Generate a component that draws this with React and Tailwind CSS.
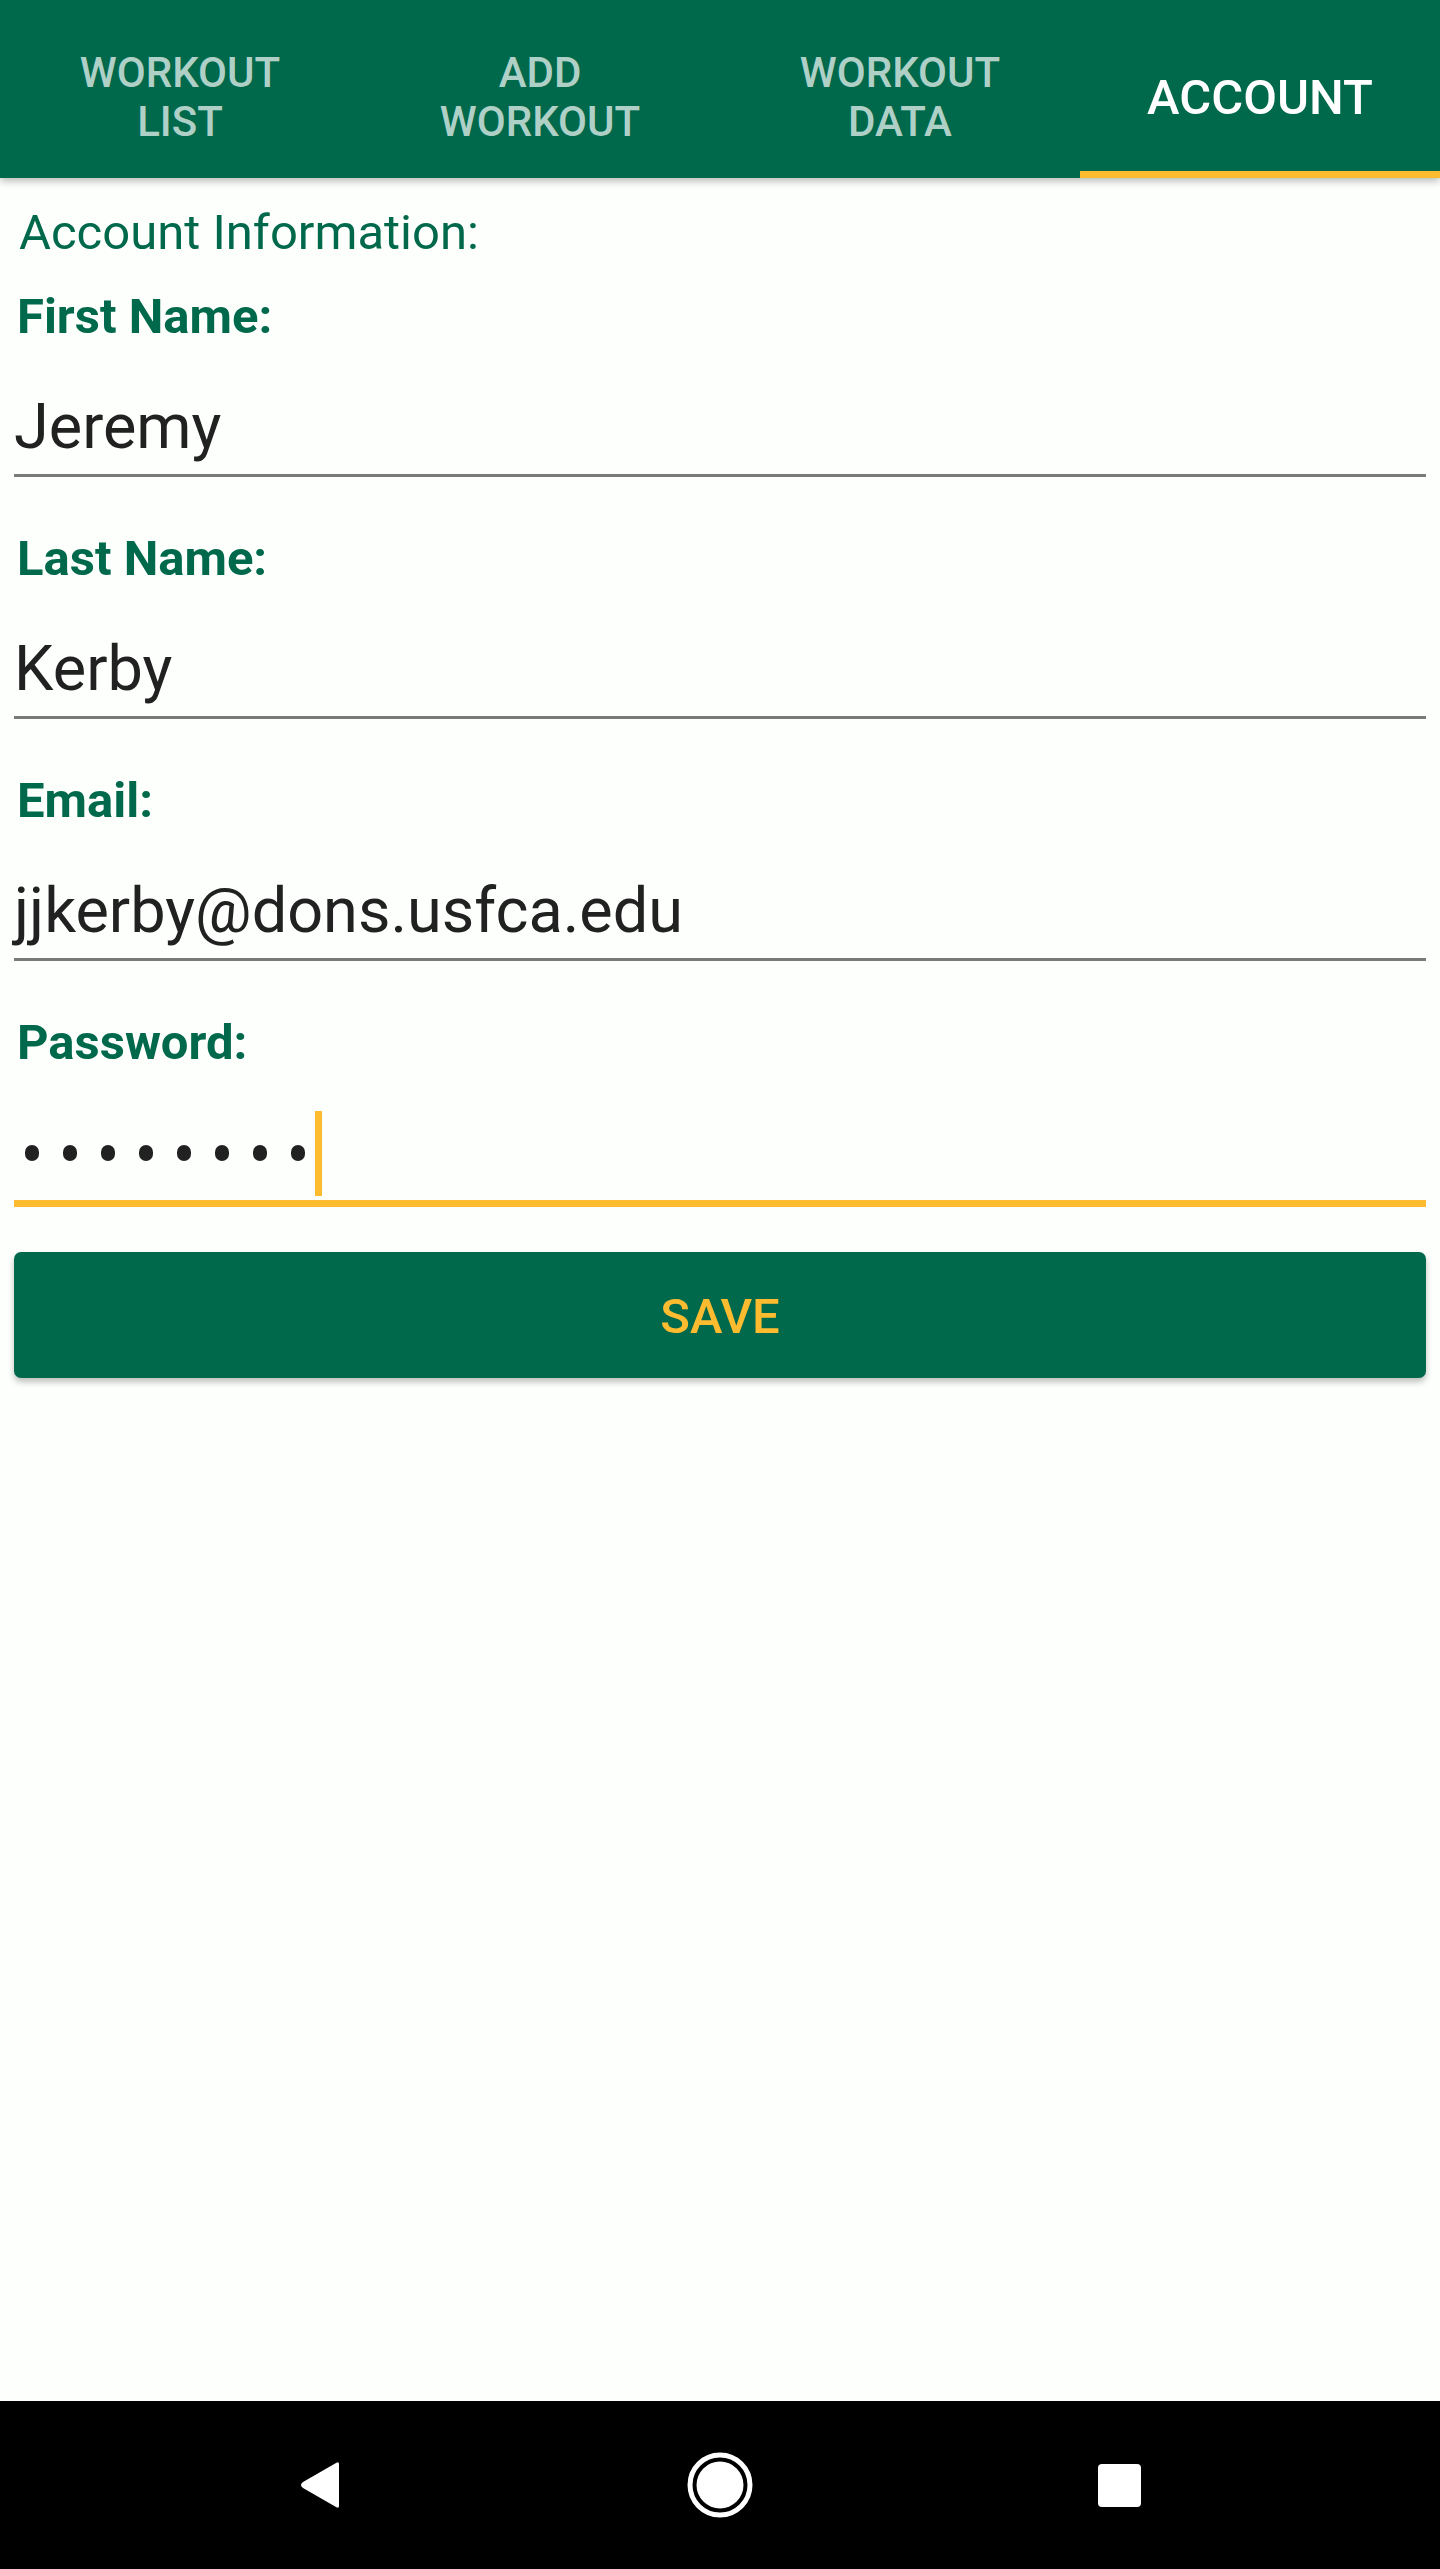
import React from "react";

const tabs = [
  { lines: ["WORKOUT", "LIST"] },
  { lines: ["ADD", "WORKOUT"] },
  { lines: ["WORKOUT", "DATA"] },
  { lines: ["ACCOUNT"], active: true },
];

const fields = [
  { label: "First Name:", value: "Jeremy" },
  { label: "Last Name:", value: "Kerby" },
  { label: "Email:", value: "jjkerby@dons.usfca.edu" },
];

const App = () => {
  return (
    <div className="flex h-[2569px] w-[1440px] flex-col bg-[#fdfffd] font-['Roboto',sans-serif]">
      {/* top tabs */}
      <div className="relative z-10 flex h-[178px] shrink-0 bg-[#00694b] shadow-[0_3px_8px_rgba(0,0,0,0.28)]">
        {tabs.map((tab, i) => (
          <div key={i} className="flex w-[360px] flex-col">
            <div
              className={
                tab.active
                  ? "flex flex-1 items-center justify-center pt-[23px] text-center text-[49px] font-medium leading-[57px] text-white"
                  : "flex flex-1 items-center justify-center pt-[23px] text-center text-[42px] font-medium leading-[49px] text-white/70"
              }
            >
              <div>
                {tab.lines.map((l) => (
                  <div key={l}>{l}</div>
                ))}
              </div>
            </div>
            <div className={tab.active ? "h-[7px] bg-[#fdbb30]" : "h-[7px]"} />
          </div>
        ))}
      </div>

      {/* account form */}
      <div className="flex-1 px-[14px] pt-[26px]">
        <div className="pl-[5px] text-[49px] leading-[57px] text-[#00694b]">
          Account Information:
        </div>

        {fields.map((f, i) => (
          <div key={f.label} className={i === 0 ? "mt-[27px]" : "mt-[53px]"}>
            <div className="pl-[3px] text-[49px] font-bold leading-[57px] text-[#00694b]">
              {f.label}
            </div>
            <div className="mt-[45px] border-b-[3px] border-[#7a7a7a] pb-[10px]">
              <div className="h-[74px] text-[63px] leading-[74px] text-[#212121]">
                {f.value}
              </div>
            </div>
          </div>
        ))}

        {/* password, focused */}
        <div className="mt-[53px]">
          <div className="pl-[3px] text-[49px] font-bold leading-[57px] text-[#00694b]">
            Password:
          </div>
          <div className="mt-[45px] border-b-[7px] border-[#fdbb30] pb-[10px]">
            <div className="flex h-[74px] items-center pl-[11px]">
              <div className="flex gap-[24px]">
                {Array.from({ length: 8 }).map((_, i) => (
                  <span key={i} className="block h-[16px] w-[14px] rounded-full bg-[#212121]" />
                ))}
              </div>
              <span className="ml-[10px] block h-[85px] w-[7px] shrink-0 bg-[#fdbb30]" />
            </div>
          </div>
        </div>

        <button className="mt-[45px] flex h-[126px] w-full items-center justify-center rounded-[7px] bg-[#00694b] pt-[3px] text-[49px] font-medium text-[#fdbb30] shadow-[0_4px_6px_rgba(0,0,0,0.25)]">
          SAVE
        </button>
      </div>

      {/* android nav bar */}
      <div className="flex h-[168px] shrink-0 items-center justify-center bg-black">
        <div className="flex w-[399px] justify-center">
          <svg width="44" height="48" viewBox="0 0 44 48">
            <path d="M40 3 L40 45 Q40 48 37 46 L4 27 Q0 24 4 21 L37 2 Q40 0 40 3 Z" fill="white" />
          </svg>
        </div>
        <div className="flex w-[399px] justify-center">
          <svg width="66" height="66" viewBox="0 0 66 66">
            <circle cx="33" cy="33" r="30" fill="none" stroke="white" strokeWidth="5" />
            <circle cx="33" cy="33" r="23.5" fill="white" />
          </svg>
        </div>
        <div className="flex w-[399px] justify-center">
          <div className="h-[43px] w-[43px] rounded-[4px] bg-white" />
        </div>
      </div>
    </div>
  );
};

export default App;
